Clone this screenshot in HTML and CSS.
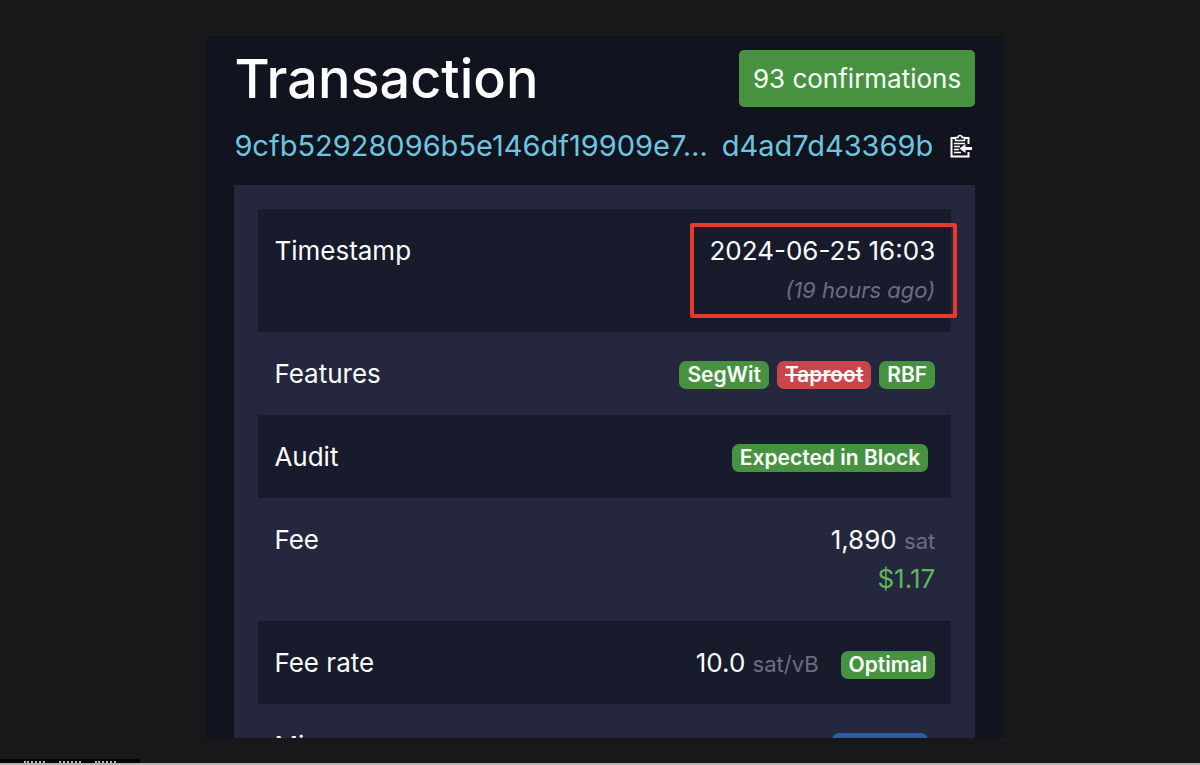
FILE: index.html
```html
<!DOCTYPE html>
<html lang="en">
  <head>
    <meta charset="UTF-8" />
    <meta name="viewport" content="width=device-width, initial-scale=1.0" />
    <title>Transaction</title>
    <link rel="stylesheet" href="styles.css">
  </head>
  <body>
    <main class="transaction">
      <header class="title">
        <h1>Transaction</h1>
        <button class="confirmations" type="button">93 confirmations</button>
      </header>
      <div class="txid">
        <a href="#">
          <span>9cfb52928096b5e146df19909e7…</span>
          <span>d4ad7d43369b</span>
        </a>
        <button class="copy" type="button" aria-label="Copy">
          <svg viewBox="0 0 24 24" width="24" height="24" fill="none" stroke="#fff">
            <path d="M7 4H2.500v18.500h17V18M19.500 10V4H15" stroke-width="2" />
            <path d="M6.500 6.500V3.500H9a2 2 0 0 1 4 0h2.500v3z" stroke-width="1.500" />
            <path d="M5 9.500h11M5 12.500h6M5 15.500h5M5 18.500h7" stroke-width="1.500" />
            <path d="M23 14.500H13" stroke-width="3" />
            <path d="M16.500 10l-6 4.500 6 4.500z" fill="#fff" stroke="none" />
          </svg>
        </button>
      </div>
      <section class="box">
        <table>
          <tr>
            <th scope="row">Timestamp</th>
            <td>
              <div class="marked">
                2024-06-25 16:03
                <i class="muted sub">(19 hours ago)</i>
              </div>
            </td>
          </tr>
          <tr>
            <th scope="row">Features</th>
            <td>
              <div class="badges">
                <span class="badge">SegWit</span>
                <span class="badge red"><s>Taproot</s></span>
                <span class="badge">RBF</span>
              </div>
            </td>
          </tr>
          <tr>
            <th scope="row">Audit</th>
            <td>
              <div class="badges inset"><span class="badge">Expected in Block</span></div>
            </td>
          </tr>
          <tr>
            <th scope="row">Fee</th>
            <td>
              1,890 <span class="muted">sat</span>
              <span class="sub fiat">$1.17</span>
            </td>
          </tr>
          <tr>
            <th scope="row">Fee rate</th>
            <td>
              <div class="badges">
                <span class="rate">10.0 <span class="muted">sat/vB</span></span>
                <span class="badge">Optimal</span>
              </div>
            </td>
          </tr>
          <tr>
            <th scope="row">Miner</th>
            <td>
              <div class="badges inset"><span class="badge blue">AntPool</span></div>
            </td>
          </tr>
        </table>
      </section>
    </main>
    <footer>
      <div class="strip"><i></i><i></i><i></i></div>
    </footer>
  </body>
</html>
```

FILE: styles.css
```css
*,
*::after {
  box-sizing: border-box;
}
body {
  margin: 0;
  height: 100vh;
  padding-top: 36px;
  display: flex;
  flex-direction: column;
  overflow: hidden;
  background: #18181a;
  color: #fff;
  font-family: Inter, "Liberation Sans", sans-serif;
  font-size: 26px;
  line-height: 39px;
}
h1 {
  margin: 0;
  font-size: 54px;
  font-weight: 500;
  line-height: 57px;
}
button {
  border: 0;
  color: inherit;
  font: inherit;
}
table {
  width: 100%;
  border-collapse: collapse;
}
tr:nth-child(odd) {
  background: #181b2b;
}
th,
td {
  padding: 22px 16px;
  vertical-align: top;
}
th {
  text-align: left;
  font-weight: 400;
}
td {
  text-align: right;
}
.transaction {
  flex: 1;
  min-height: 0;
  margin: 0 16.4% 0 17.2%;
  padding: 14px 28px 0;
  overflow: hidden;
  background: #11131f;
}
.title {
  display: flex;
  justify-content: space-between;
}
.confirmations {
  padding: 9px 14px;
  border-radius: 5px;
  background: #479241;
}
.txid {
  display: flex;
  align-items: center;
  justify-content: space-between;
  margin: 19px 0 20px;
  padding-right: 2px;
  font-size: 29px;
}
.txid a {
  display: flex;
  gap: 14px;
  color: #6dc5df;
  text-decoration: none;
}
.copy {
  display: flex;
  padding: 0;
  background: none;
}
.box {
  padding: 24px;
  background: #24273d;
}
.muted {
  color: #6c6e7c;
  font-size: 22px;
  line-height: 22px;
}
.sub {
  display: block;
  line-height: 40px;
}
.fiat {
  color: #5fb65a;
}
.marked {
  position: relative;
}
.marked::after {
  content: "";
  position: absolute;
  top: -8px;
  right: -22px;
  width: 267px;
  height: 95px;
  border: 4px solid #e63b2c;
  border-radius: 2px;
}
.badges {
  display: flex;
  align-items: baseline;
  justify-content: flex-end;
  gap: 8px;
}
.inset {
  padding-right: 7px;
}
.rate {
  margin-right: 14px;
}
.badge {
  margin-top: 7px;
  padding: 0 8px;
  border-radius: 7px;
  background: #479241;
  font-size: 21px;
  font-weight: 600;
  line-height: 28px;
}
.red {
  background: #ca444b;
}
.blue {
  background: #2b5cab;
}
footer {
  margin-top: 21px;
  border-bottom: 2px solid #b5b3b3;
}
.strip {
  display: flex;
  gap: 14px;
  width: 140px;
  height: 4px;
  padding: 2px 24px 0;
  background: #050505;
}
.strip i {
  flex: 1;
  border-top: 2px dotted #b5b3b3;
}
```
